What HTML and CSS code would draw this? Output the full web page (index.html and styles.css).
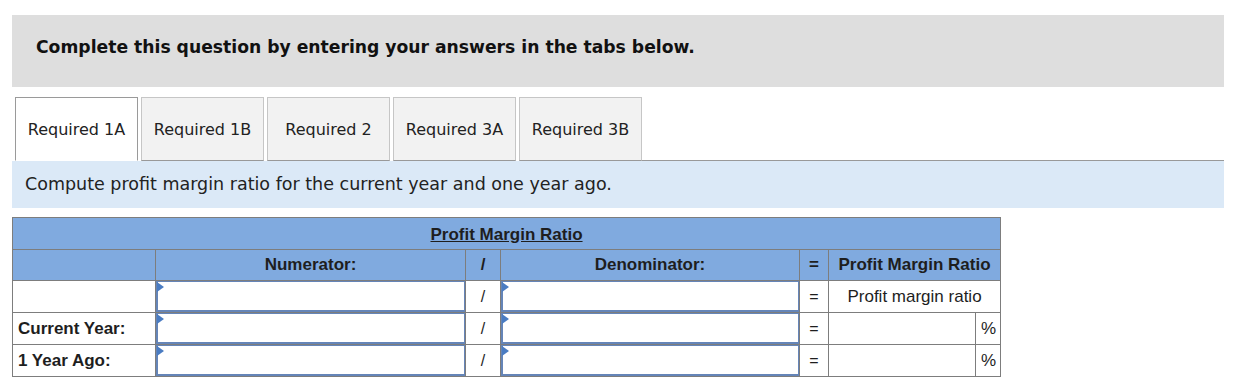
FILE: index.html
```html
<!DOCTYPE html>
<html lang="en">
<head>
    <meta charset="UTF-8">
    <title>Profit Margin Ratio</title>
    <link rel="stylesheet" href="styles.css">
</head>
<body>
    <div class="instructions">
        <h2>Complete this question by entering your answers in the tabs below.</h2>
    </div>

    <div class="tabs">
        <div class="tab active">Required 1A</div>
        <div class="tab">Required 1B</div>
        <div class="tab">Required 2</div>
        <div class="tab">Required 3A</div>
        <div class="tab">Required 3B</div>
        <div class="tab-rest"></div>
    </div>

    <div class="prompt">Compute profit margin ratio for the current year and one year ago.</div>

    <table class="ratio-table">
        <colgroup>
            <col style="width: 143px">
            <col style="width: 310px">
            <col style="width: 35px">
            <col style="width: 299px">
            <col style="width: 29px">
            <col style="width: 147px">
            <col style="width: 25px">
        </colgroup>
        <tr class="title-row">
            <th colspan="7"><u>Profit Margin Ratio</u></th>
        </tr>
        <tr class="head-row">
            <th></th>
            <th>Numerator:</th>
            <th>/</th>
            <th>Denominator:</th>
            <th>=</th>
            <th colspan="2">Profit Margin Ratio</th>
        </tr>
        <tr>
            <td class="label"></td>
            <td class="entry"><input type="text"></td>
            <td class="op">/</td>
            <td class="entry"><input type="text"></td>
            <td class="op">=</td>
            <td colspan="2" class="result-name">Profit margin ratio</td>
        </tr>
        <tr>
            <td class="label">Current Year:</td>
            <td class="entry"><input type="text"></td>
            <td class="op">/</td>
            <td class="entry"><input type="text"></td>
            <td class="op">=</td>
            <td class="result"></td>
            <td class="unit">%</td>
        </tr>
        <tr>
            <td class="label">1 Year Ago:</td>
            <td class="entry"><input type="text"></td>
            <td class="op">/</td>
            <td class="entry"><input type="text"></td>
            <td class="op">=</td>
            <td class="result"></td>
            <td class="unit">%</td>
        </tr>
    </table>
</body>
</html>
```

FILE: styles.css
```css
* {
    margin: 0;
    padding: 0;
    box-sizing: border-box;
}

body {
    background: #fff;
    color: #1a1a1a;
    font-family: "DejaVu Sans", Verdana, sans-serif;
    width: 1240px;
}

.instructions {
    margin: 15px 16px 0 12px;
    height: 72px;
    background: #dedede;
    padding-left: 24px;
    display: flex;
    align-items: center;
}

.instructions h2 {
    font-size: 17.2px;
    font-weight: bold;
    color: #111;
    padding-bottom: 8px;
}

.tabs {
    display: flex;
    margin: 10px 16px 0 12px;
    height: 64px;
}

.tab {
    width: 123px;
    height: 64px;
    margin-left: 3px;
    background: #f2f2f2;
    border: 1px solid #c6c6c6;
    border-bottom: 1px solid #999;
    font-size: 16px;
    color: #222;
    display: flex;
    align-items: center;
    justify-content: center;
}

.tab + .tab {
    margin-left: 3px;
}

.tab.active {
    background: #fff;
    border-color: #9a9a9a;
    border-bottom-color: #fff;
}

.tab-rest {
    flex: 1;
    border-bottom: 1px solid #999;
}

.prompt {
    margin: 0 16px 0 12px;
    height: 47px;
    background: #dbe9f7;
    padding: 13px 0 0 13px;
    font-size: 17.5px;
    color: #222;
}

.ratio-table {
    margin: 9px 0 0 12px;
    width: 988px;
    table-layout: fixed;
    border-collapse: collapse;
    font-family: "Liberation Sans", Arial, sans-serif;
    font-size: 17px;
    color: #1e1e1e;
}

.ratio-table th,
.ratio-table td {
    border: 1px solid #7d7d7d;
    height: 32px;
    text-align: center;
    vertical-align: middle;
}

.ratio-table th {
    background: #80aadf;
    font-weight: bold;
}

.title-row th {
    height: 32px;
    padding-top: 2px;
}

.head-row th {
    height: 31px;
}

.ratio-table td.label {
    text-align: left;
    padding-left: 5px;
    font-weight: bold;
}

.ratio-table td.entry {
    position: relative;
    padding: 0;
}

.entry input {
    display: block;
    width: 100%;
    height: 31px;
    border: 2px solid #6585b8;
    border-top-width: 1px;
    border-right-width: 1px;
    background: #fff;
    outline: none;
}

/* little marker that the cell takes an answer */
.entry::before {
    content: "";
    position: absolute;
    left: 1px;
    top: 1px;
    border-left: 7px solid #4a7cc2;
    border-top: 5px solid transparent;
    border-bottom: 5px solid transparent;
}

.op {
    font-size: 16px;
}

.result-name {
    font-size: 17px;
}

.ratio-table td.unit {
    text-align: right;
    padding-right: 4px;
}
```
